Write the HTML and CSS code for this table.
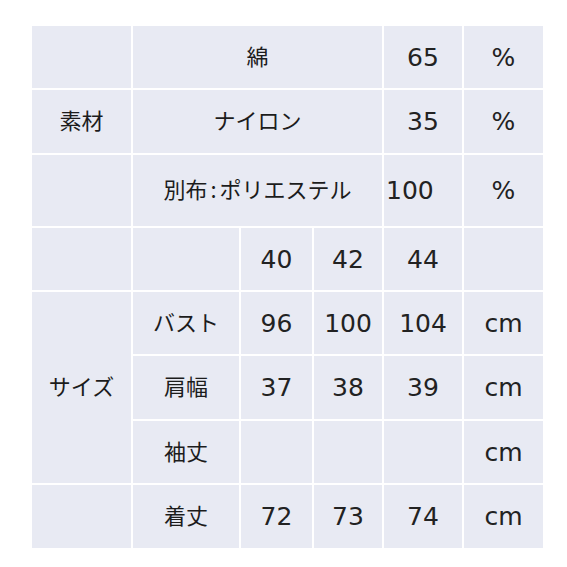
FILE: index.html
```html
<!DOCTYPE html>
<html lang="ja">
<head>
<meta charset="utf-8">
<link rel="stylesheet" href="styles.css">
</head>
<body>
<div class="spec">
  <div class="cell"></div>
  <div class="cell span3 jp">綿</div>
  <div class="cell">65</div>
  <div class="cell">%</div>

  <div class="cell jp">素材</div>
  <div class="cell span3 jp">ナイロン</div>
  <div class="cell">35</div>
  <div class="cell">%</div>

  <div class="cell"></div>
  <div class="cell span3 jp">別布<span class="colon">:</span>ポリエステル</div>
  <div class="cell left">100</div>
  <div class="cell">%</div>

  <div class="cell"></div>
  <div class="cell"></div>
  <div class="cell">40</div>
  <div class="cell">42</div>
  <div class="cell">44</div>
  <div class="cell"></div>

  <div class="cell rspan3 jp">サイズ</div>
  <div class="cell jp">バスト</div>
  <div class="cell">96</div>
  <div class="cell">100</div>
  <div class="cell">104</div>
  <div class="cell">cm</div>

  <div class="cell jp">肩幅</div>
  <div class="cell">37</div>
  <div class="cell">38</div>
  <div class="cell">39</div>
  <div class="cell">cm</div>

  <div class="cell jp">袖丈</div>
  <div class="cell"></div>
  <div class="cell"></div>
  <div class="cell"></div>
  <div class="cell">cm</div>

  <div class="cell"></div>
  <div class="cell jp">着丈</div>
  <div class="cell">72</div>
  <div class="cell">73</div>
  <div class="cell">74</div>
  <div class="cell">cm</div>
</div>
</body>
</html>
```

FILE: styles.css
```css
html, body {
  margin: 0;
  padding: 0;
  background: #ffffff;
}

body {
  padding: 26px 0 0 32px;
}

.spec {
  display: grid;
  width: 509px;
  grid-template-columns: 99px 106px 71px 68px 78px 79px;
  grid-template-rows: 62px 63px 71px 62px 62px 63px 62px 63px;
  gap: 2px;
  font-family: "DejaVu Sans", "Noto Sans CJK JP", sans-serif;
  font-size: 25px;
  color: #222222;
}

.cell {
  background: #e8eaf3;
  display: flex;
  align-items: center;
  justify-content: center;
  white-space: nowrap;
}

.jp {
  font-family: "Noto Sans CJK JP", sans-serif;
  font-size: 22px;
  line-height: 1;
  padding-bottom: 5px;
  color: #1c1c1c;
}

.colon {
  padding: 0 3px;
}

.span3 {
  grid-column: span 3;
}

.rspan3 {
  grid-row: span 3;
}

.left {
  justify-content: flex-start;
  padding-left: 2px;
}
```
